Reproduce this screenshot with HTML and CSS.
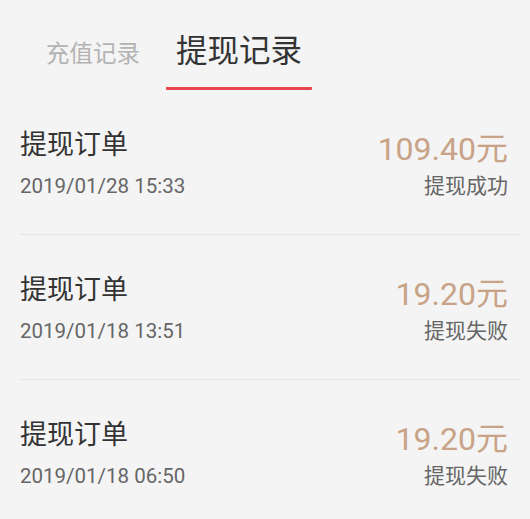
FILE: index.html
```html
<!DOCTYPE html>
<html lang="zh-CN">
<head>
<meta charset="utf-8">
<title>提现记录</title>
<link rel="stylesheet" href="styles.css">
</head>
<body>
<div class="tabs">
  <div class="tab">充值记录</div>
  <div class="tab active">提现记录</div>
</div>
<div class="list">
  <div class="row">
    <div class="left">
      <div class="title">提现订单</div>
      <div class="date">2019/01/28 15:33</div>
    </div>
    <div class="right">
      <div class="amount">109.40元</div>
      <div class="status">提现成功</div>
    </div>
  </div>
  <div class="row">
    <div class="left">
      <div class="title">提现订单</div>
      <div class="date">2019/01/18 13:51</div>
    </div>
    <div class="right">
      <div class="amount">19.20元</div>
      <div class="status">提现失败</div>
    </div>
  </div>
  <div class="row">
    <div class="left">
      <div class="title">提现订单</div>
      <div class="date">2019/01/18 06:50</div>
    </div>
    <div class="right">
      <div class="amount">19.20元</div>
      <div class="status">提现失败</div>
    </div>
  </div>
</div>
</body>
</html>
```
FILE: styles.css
```css
html, body {
  margin: 0;
  padding: 0;
  background: #f4f4f4;
  font-family: "Roboto", "Noto Sans CJK SC", sans-serif;
}
.tabs {
  display: flex;
  align-items: flex-start;
  height: 90px;
  padding-left: 46px;
  gap: 26px;
}
.tab {
  font-size: 23.5px;
  line-height: 24px;
  padding-top: 42px;
  color: #b3b3b3;
}
.tab.active {
  width: 146px;
  text-align: center;
  font-size: 31.5px;
  line-height: 32px;
  padding-top: 36px;
  padding-bottom: 19px;
  color: #333;
  border-bottom: 3px solid #e8464d;
  border-radius: 1px;
}
.row {
  display: flex;
  justify-content: space-between;
  align-items: flex-start;
  height: 144px;
  margin: 0 10px 0 20px;
  padding-right: 12px;
  border-bottom: 1px solid #e6e6e6;
}
.row:last-child {
  border-bottom: none;
}
.left, .right {
  display: flex;
  flex-direction: column;
}
.right {
  align-items: flex-end;
  padding-top: 43px;
}
.left {
  padding-top: 41px;
}
.title {
  font-size: 27px;
  line-height: 28px;
  color: #333;
}
.date {
  margin-top: 17px;
  font-size: 20.5px;
  line-height: 21px;
  color: #666;
}
.amount {
  font-size: 32px;
  line-height: 32px;
  color: #c8a387;
}
.status {
  margin-top: 11px;
  font-size: 21px;
  line-height: 21px;
  color: #666;
}
```
